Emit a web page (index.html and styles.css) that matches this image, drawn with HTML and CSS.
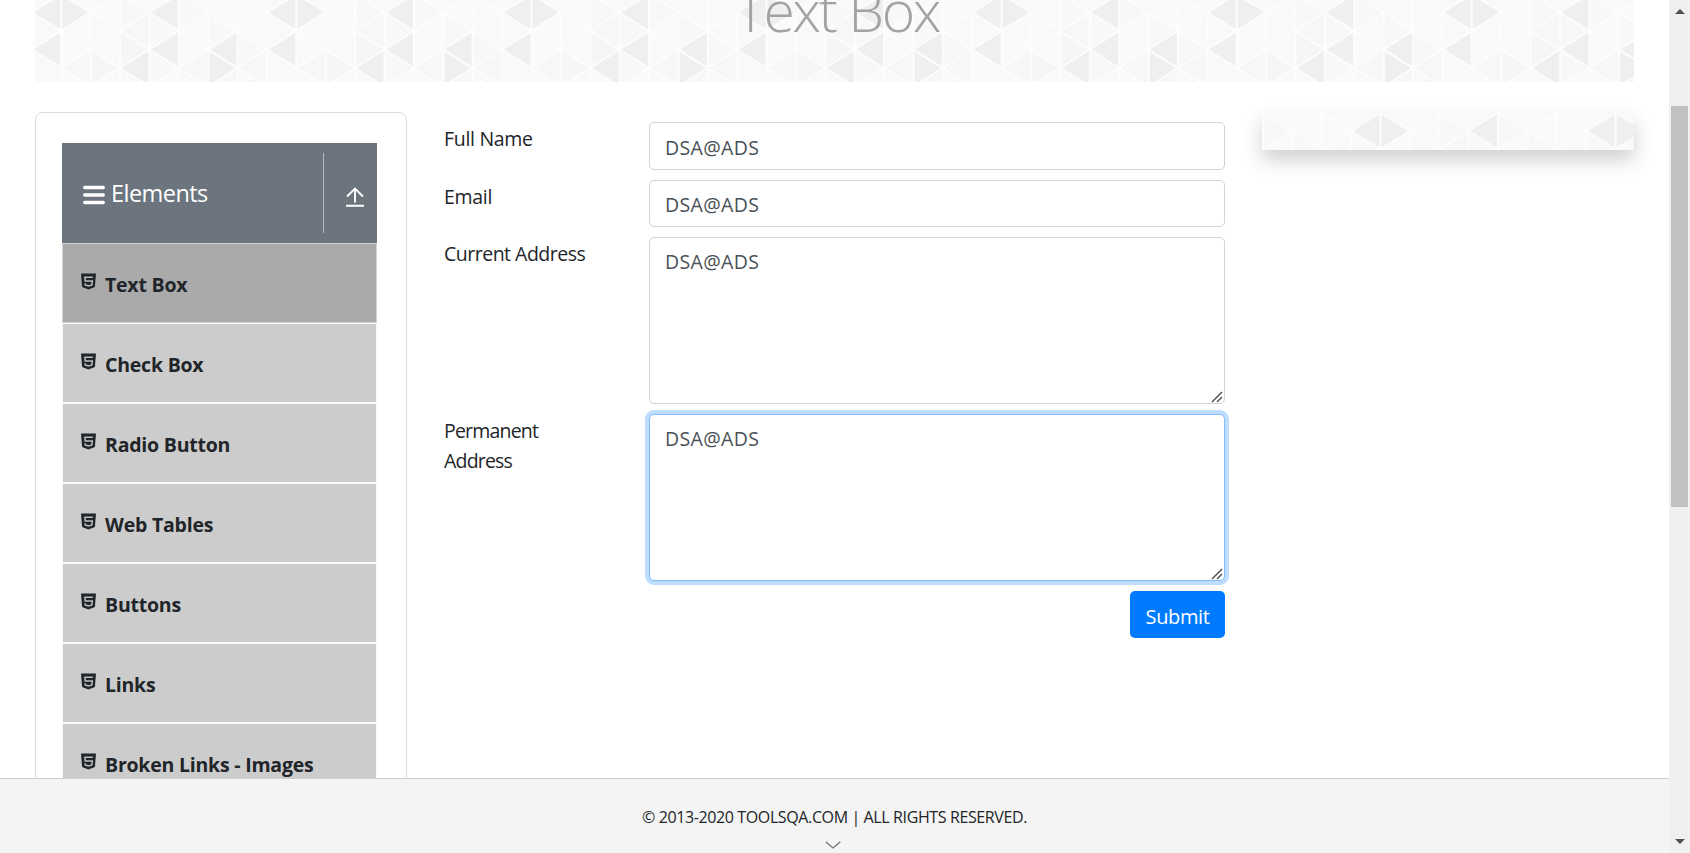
FILE: index.html
```
<!DOCTYPE html>
<html lang="en">
<head>
<meta charset="utf-8">
<title>Text Box</title>
<link rel="stylesheet" href="styles.css">
</head>
<body>
<svg class="defs" width="0" height="0" aria-hidden="true">
  <defs>
    <g id="tile" stroke="#fdfdfd" stroke-width="2" stroke-linejoin="round">
      <rect width="235.1" height="111" fill="#f9f9f9" stroke="none"/>
      <!-- right-pointing triangles on even lines -->
      <path fill="#efefef" d="M0 0V37L29.4 18.5ZM147 56V93L176.3 74.5Z"/>
      <path fill="#f6f6f6" d="M58.8 37V74L88.2 55.5ZM176.3 18.5V55.5L205.7 37ZM29.4 55.5V92.5L58.8 74ZM205.7 74V111L176.3 92.5Z"/>
      <path fill="#f8f8f8" d="M58.8 0V37L88.2 18.5ZM117.6 0V37L147 18.5ZM176.3 37V74L205.7 55.5ZM88.2 18.5V55.5L117.6 37ZM88.2 55.5V92.5L117.6 74ZM147 18.5V55.5L176.3 37Z"/>
      <path fill="#fafafa" d="M0 37V74L29.4 55.5ZM117.6 37V74L147 55.5ZM176.3 0V37L205.7 18.5ZM0 74V111L29.4 92.5Z"/>
      <!-- left-pointing triangles -->
      <path fill="#efefef" d="M117.6 0V37L88.2 18.5ZM235.1 0V37L205.7 18.5ZM117.6 37V74L88.2 55.5ZM235.1 37V74L205.7 55.5ZM176.3 37V74L147 55.5ZM88.2 55.5V92.5L58.8 74Z"/>
      <path fill="#f7f7f7" d="M29.4 55.5V92.5L0 74ZM88.2 18.5V55.5L58.8 37ZM147 55.5V92.5L117.6 74ZM205.7 55.5V92.5L176.3 74ZM176.3 74V111L147 92.5Z"/>
      <path fill="#fafafa" d="M29.4 18.5V55.5L0 37ZM58.8 0V37L29.4 18.5ZM147 18.5V55.5L117.6 37ZM176.3 0V37L147 18.5ZM117.6 74V111L88.2 92.5Z"/>
      <path fill="#f9f9f9" d="M58.8 37V74L29.4 55.5ZM205.7 18.5V55.5L176.3 37ZM58.8 74V111L29.4 92.5Z"/>
    </g>
    <pattern id="tri-banner" width="235.1" height="111" patternUnits="userSpaceOnUse" patternTransform="translate(26.2 -6)"><use href="#tile"/></pattern>
    <pattern id="tri-side" width="235.1" height="111" patternUnits="userSpaceOnUse" patternTransform="translate(118.5 .5)"><use href="#tile"/></pattern>
  </defs>
  <symbol id="html5" viewBox="0 0 15 17">
    <path fill="currentColor" d="M0 .5h15l-1.1 13.6L7.500 16.500l-6.400-2.400z"/>
    <path fill="none" stroke="#bcbcbc" stroke-width="1.500" d="M11.800 4.200H3.900l.3 3.700h7.100l-.4 4-3.400 1-3.300-1-.1-1.500"/>
  </symbol>
  <symbol id="grip" viewBox="0 0 12 12">
    <path fill="none" stroke="#555" stroke-width="1.500" d="M1 11 11 1M6 11l5-5"/>
  </symbol>
</svg>

<div class="window">
  <div class="page">
    <main class="content">
      <header class="banner">
        <svg class="fill" width="100%" height="100%"><rect width="100%" height="100%" fill="url(#tri-banner)"/></svg>
        <h1 class="title">Text Box</h1>
      </header>
      <div class="columns">
        <aside class="sidebar">
          <div class="group-head">
            <svg class="bars" viewBox="0 0 22 20"><path stroke="#fff" stroke-width="3.300" stroke-linecap="round" d="M1.700 2.500h18.600M1.700 10h18.600M1.700 17.500h18.600"/></svg>
            <span class="group-name">Elements</span>
            <span class="collapse"><svg viewBox="0 0 18 20"><path fill="none" stroke="#fff" stroke-width="1.900" d="M9 15.500V1.500M1 9.500l8-8 8 8M0 18.800h18"/></svg></span>
          </div>
          <ul class="menu">
            <li class="item active"><svg class="icon"><use href="#html5"/></svg><span>Text Box</span></li>
            <li class="item"><svg class="icon"><use href="#html5"/></svg><span>Check Box</span></li>
            <li class="item"><svg class="icon"><use href="#html5"/></svg><span>Radio Button</span></li>
            <li class="item"><svg class="icon"><use href="#html5"/></svg><span>Web Tables</span></li>
            <li class="item"><svg class="icon"><use href="#html5"/></svg><span>Buttons</span></li>
            <li class="item"><svg class="icon"><use href="#html5"/></svg><span>Links</span></li>
            <li class="item"><svg class="icon"><use href="#html5"/></svg><span>Broken Links - Images</span></li>
          </ul>
        </aside>
        <form class="form">
          <label class="label" for="name">Full Name</label>
          <input class="control" id="name" type="text" value="DSA@ADS">
          <label class="label" for="email">Email</label>
          <input class="control" id="email" type="text" value="DSA@ADS">
          <label class="label current" for="current">Current Address</label>
          <div class="area"><textarea class="control" id="current">DSA@ADS</textarea><svg class="grip"><use href="#grip"/></svg></div>
          <label class="label permanent" for="permanent">Permanent Address</label>
          <div class="area"><textarea class="control focused" id="permanent">DSA@ADS</textarea><svg class="grip"><use href="#grip"/></svg></div>
          <button class="submit" type="button">Submit</button>
        </form>
        <div class="side-ad"><svg class="fill" width="100%" height="100%"><rect width="100%" height="100%" fill="url(#tri-side)"/></svg></div>
      </div>
    </main>
    <footer class="footer">
      <span class="copyright">© 2013-2020 TOOLSQA.COM | ALL RIGHTS RESERVED.</span>
      <svg class="chevron" viewBox="0 0 16 8"><path fill="none" stroke="#777" stroke-width="1.300" d="m.7.700 7.300 6.300L15.300.7"/></svg>
    </footer>
  </div>
  <div class="scrollbar">
    <svg class="arrow" viewBox="0 0 10 5"><path fill="#505050" d="M0 5 5 0l5 5z"/></svg>
    <div class="thumb"></div>
    <svg class="arrow down" viewBox="0 0 10 5"><path fill="#505050" d="M0 0l5 5 5-5z"/></svg>
  </div>
</div>
</body>
</html>
```
FILE: styles.css
```
* { box-sizing: border-box; }
body {
  margin: 0;
  background: #fff;
  color: #212529;
  font: 20px/30px "Open Sans", "Noto Sans", sans-serif;
  overflow: hidden;
}
.defs { position: absolute; }
.window { display: flex; height: 853px; }
.page { flex: 1; display: flex; flex-direction: column; min-width: 0; }
.content { flex: 1; min-height: 0; overflow: hidden; padding: 0 35px; }
.banner {
  position: relative;
  height: 82px;
  overflow: hidden;
  text-align: center;
}
.fill { display: block; }
.title {
  position: absolute;
  left: 6px;
  right: 0;
  top: -32px;
  margin: 0;
  color: #a3a3a3;
  font-size: 57px;
  line-height: 84px;
  font-weight: 300;
  letter-spacing: -2.2px;
}
.columns {
  display: grid;
  grid-template-columns: 372px 781px 372px;
  column-gap: 37px;
  align-items: start;
  margin-top: 30px;
}
.sidebar {
  height: 900px;
  padding: 30px 29px 0 26px;
  border: 1px solid #dcdcdc;
  border-radius: 8px;
}
.group-head {
  display: flex;
  align-items: center;
  width: 315px;
  height: 100px;
  padding-left: 21px;
  background: #6c757d;
  color: #fff;
}
.bars { width: 22px; height: 20px; margin-top: 4px; }
.group-name { margin: -1px 0 0 6px; font-size: 23.5px; letter-spacing: -.55px; }
.collapse {
  display: flex;
  align-items: center;
  justify-content: center;
  width: 54px;
  height: 80px;
  margin-left: auto;
  padding: 7px 0 0 8px;
  border-left: 1px solid #b5babe;
}
.collapse svg { width: 18px; height: 20px; }
.menu { margin: 0; padding: 0; list-style: none; width: 315px; }
.item {
  display: flex;
  align-items: center;
  height: 80px;
  padding: 4px 0 0 18px;
  border: 1px solid #f8f9fa;
  background: #ccc;
  font-size: 19.5px;
  font-weight: 700;
  letter-spacing: -.22px;
}
.item.active { background: #aaa; border-color: #ced4da; }
.icon { width: 15px; height: 17px; margin: -7px 9px 0 0; }
.form {
  display: grid;
  grid-template-columns: 205px 576px;
  grid-template-rows: 48px 47px 167px 167px 47px;
  row-gap: 10px;
  padding-top: 10px;
}
.label { padding: 2px 40px 0 0; font-size: 19.5px; letter-spacing: -.3px; }
.label.current { white-space: nowrap; letter-spacing: -.5px; }
.label.permanent { letter-spacing: -.8px; }
.control {
  display: block;
  width: 100%;
  height: 100%;
  margin: 0;
  padding: 7px 15px 5px;
  border: 1px solid #ced4da;
  border-radius: 5px;
  background: #fff;
  color: #495057;
  font: inherit;
  font-size: 19.5px;
  letter-spacing: .35px;
  outline: 0;
  resize: none;
}
.area { position: relative; }
.area .control { padding-top: 9px; }
.grip { position: absolute; right: 2px; bottom: 1px; width: 12px; height: 12px; }
.focused { border-color: #80bdff; box-shadow: 0 0 0 4px #bfdeff; }
.submit {
  grid-column: 2;
  justify-self: end;
  width: 95px;
  border: 0;
  border-radius: 5px;
  padding: 4px 0 0;
  background: #007bff;
  color: #fff;
  font: inherit;
  letter-spacing: -.4px;
}
.side-ad { height: 38px; box-shadow: 0 10px 20px rgba(0, 0, 0, .19); }
.footer {
  display: flex;
  flex-direction: column;
  align-items: center;
  height: 75px;
  padding-top: 22px;
  border-top: 1px solid #ccc;
  background: #f4f4f4;
}
.copyright { font-size: 16px; line-height: 32px; letter-spacing: -.38px; }
.chevron { width: 16px; height: 8px; margin: 8px 4px 0 0; }
.scrollbar {
  display: flex;
  flex-direction: column;
  align-items: center;
  width: 21px;
  padding: 9px 2px;
  background: #f0f0f0;
}
.arrow { width: 10px; height: 5px; flex: none; }
.arrow.down { margin-top: auto; }
.thumb { width: 17px; height: 401px; margin-top: 92px; background: #c1c1c1; }
```
